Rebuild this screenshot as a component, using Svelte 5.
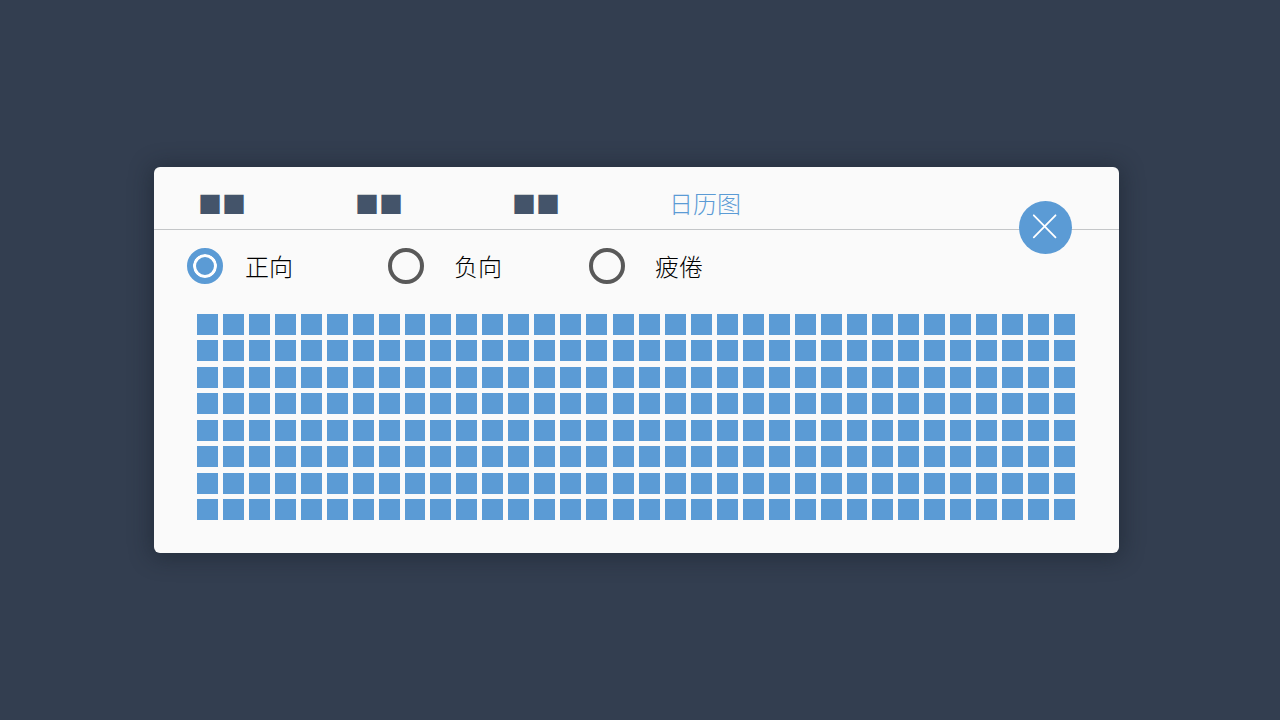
<script>
  const tabs = [
    { id: 'first', label: '■■' },
    { id: 'second', label: '■■' },
    { id: 'third', label: '■■' },
    { id: 'calendar', label: '日历图' }
  ];
  const moods = [
    { id: 'positive', label: '正向' },
    { id: 'negative', label: '负向' },
    { id: 'tired', label: '疲倦' }
  ];
  const rows = 8;
  const halves = [16, 18];

  let activeTab = $state('calendar');
  let mood = $state('positive');
  let open = $state(true);
</script>

<main class="page">
  {#if open}
    <section class="panel">
      <header class="header">
        <nav class="tabs">
          {#each tabs as tab (tab.id)}
            <button
              type="button"
              class="tab"
              class:active={activeTab === tab.id}
              onclick={() => (activeTab = tab.id)}>{tab.label}</button>
          {/each}
        </nav>
        <button type="button" class="close" aria-label="关闭" onclick={() => (open = false)}>
          <svg viewBox="0 0 53 53" aria-hidden="true">
            <path d="M14.8 14.3 36.5 36.3M36.5 14.3 14.8 36.3" />
          </svg>
        </button>
      </header>

      <div class="moods">
        {#each moods as item (item.id)}
          <label class="mood">
            <input type="radio" name="mood" value={item.id} bind:group={mood} />
            <span>{item.label}</span>
          </label>
        {/each}
      </div>

      <div class="calendar">
        {#each halves as columns}
          <div
            class="half"
            style="flex-grow: {columns}; flex-basis: {(columns - 1) * 5}px; grid-template-columns: repeat({columns}, minmax(0, 1fr))">
            {#each Array(columns * rows) as _}
              <span class="day"></span>
            {/each}
          </div>
        {/each}
      </div>
    </section>
  {/if}
</main>

<style>
  :global(body) {
    margin: 0;
    background: #333e50;
  }

  .page {
    box-sizing: border-box;
    min-height: 100vh;
    padding: 24px 161px 24px 154px;
    display: flex;
    align-items: center;
    font-family: 'Noto Sans CJK SC', sans-serif;
    font-size: 24px;
    font-weight: 300;
    line-height: 36px;
    color: #000;
  }

  .panel {
    flex: 1;
    min-width: 0;
    border-radius: 6px;
    background: #fafafa;
    box-shadow: 0 2px 22px 3px rgba(20, 28, 38, 0.45);
  }

  .header {
    position: relative;
    padding: 18px 44px 8px;
    border-bottom: 1px solid #c4c6c8;
  }

  .tabs {
    display: grid;
    grid-template-columns: repeat(4, 157px);
  }

  .tab {
    justify-self: start;
    padding: 0;
    border: 0;
    background: none;
    font: inherit;
    color: #44546a;
    cursor: pointer;
  }

  .tab.active {
    color: #5b9bd5;
  }

  .close {
    position: absolute;
    right: 47px;
    bottom: -25px;
    width: 53px;
    height: 53px;
    padding: 0;
    border: 0;
    border-radius: 50%;
    background: #5b9bd5;
    cursor: pointer;
  }

  .close svg {
    display: block;
    width: 100%;
    height: 100%;
    fill: none;
    stroke: #fff;
    stroke-width: 1.8;
    stroke-linecap: round;
  }

  .moods {
    display: grid;
    grid-template-columns: repeat(3, 201px);
    padding: 18px 33px 0;
  }

  .mood {
    display: flex;
    align-items: center;
    gap: 30px;
    cursor: pointer;
  }

  .mood:first-child {
    gap: 22px;
  }

  .mood input {
    appearance: none;
    box-sizing: border-box;
    flex: none;
    width: 36px;
    height: 36px;
    margin: 0;
    border: 4px solid #595959;
    border-radius: 50%;
    cursor: pointer;
  }

  .mood input:checked {
    border: 6px solid #5b9bd5;
    background: #5b9bd5;
    box-shadow: inset 0 0 0 3px #fff;
  }

  .calendar {
    display: flex;
    gap: 6px;
    padding: 30px 44px 33px 43px;
  }

  .half {
    display: grid;
    grid-auto-rows: 21px;
    align-content: space-between;
    column-gap: 5px;
    height: 206px;
  }

  .day {
    background: #5b9bd5;
  }
</style>
